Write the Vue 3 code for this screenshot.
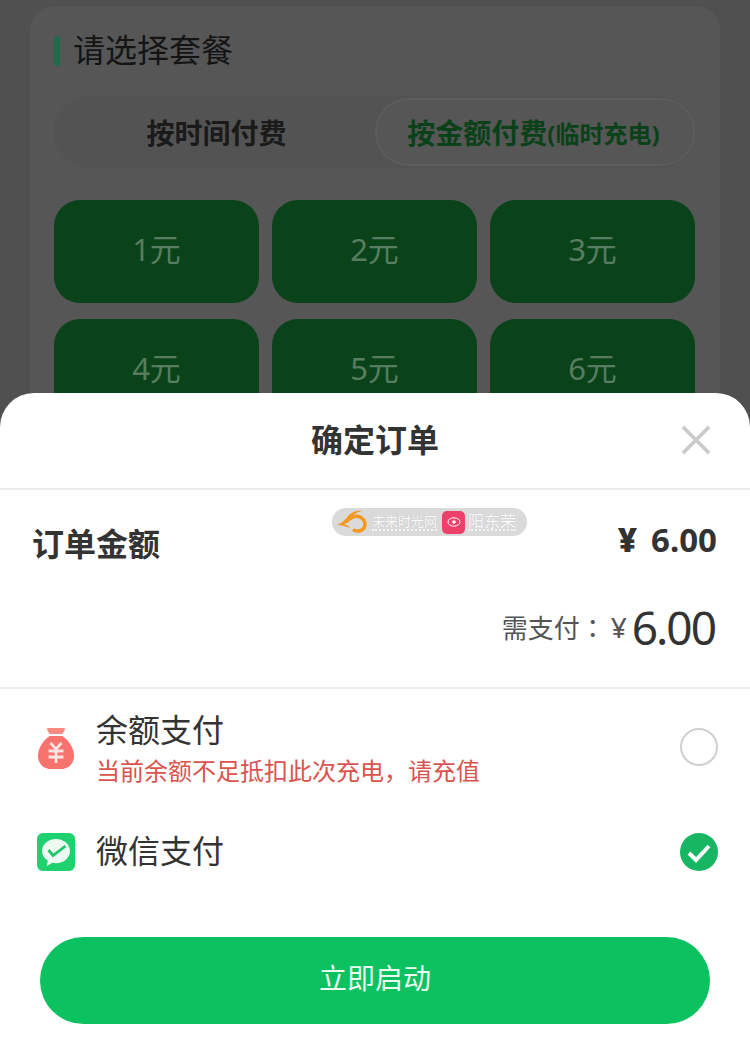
<template>
  <div class="screen">
    <section class="page">
      <div class="card">
        <div class="card-title"><i class="title-bar"></i><span class="title-text">请选择套餐</span></div>
        <div class="tabs">
          <div class="tab first">按时间付费</div>
          <div class="tab active">按金额付费<span class="tab-note">(临时充电)</span></div>
        </div>
        <div class="tiles">
          <div v-for="n in 6" :key="n" class="tile">{{ n }}元</div>
        </div>
      </div>
    </section>

    <section class="sheet">
      <header class="sheet-head">
        <h2>确定订单</h2>
        <svg class="close" viewBox="0 0 30 30" width="30" height="30">
          <path d="M2 2 28 28M28 2 2 28" stroke="#c9c9c9" stroke-width="3.4" fill="none" />
        </svg>
      </header>

      <div class="order">
        <div class="order-row">
          <span class="order-label">订单金额</span>
          <span class="order-price"><b class="yen">¥</b>6.00</span>
        </div>
        <div class="pay-row">
          <span class="pay-label">需支付<span class="pay-colon">：</span></span>
          <span class="pay-yen">¥</span>
          <span class="pay-num">6.00</span>
        </div>
      </div>

      <div class="methods">
        <div class="method balance">
          <svg class="method-icon bag" viewBox="0 0 36 41" width="36" height="41">
            <path d="M10 0h16c1 0 1.400.8 1 1.600L24.500 6h-13L9 1.600C8.600.8 9 0 10 0z" fill="#f98a84" />
            <path d="M11.500 8h13C30 12 36 19 36 28c0 8-6 13-13 13H13C6 41 0 36 0 28 0 19 6 12 11.500 8z" fill="#f8736d" />
            <path d="M12.500 15l5.500 6 5.500-6M10.500 23h15M10.500 29h15M18 21v14" stroke="#fde4e2" stroke-width="2.800" fill="none" />
          </svg>
          <div class="method-text">
            <div class="method-name">余额支付</div>
            <div class="method-warn">当前余额不足抵扣此次充电，请充值</div>
          </div>
          <span class="radio"></span>
        </div>
        <div class="method wechat">
          <svg class="method-icon" viewBox="0 0 38 38" width="38" height="38">
            <rect width="38" height="38" rx="6" fill="#1fd16f" />
            <path d="M19 6C11.300 6 5 11.200 5 18c0 4 2.300 7.400 5.700 9.600L10 33l5.300-3.200c1.200.3 2.400.4 3.700.4 7.700 0 14-5.400 14-12.200S26.700 6 19 6z" fill="#eefbf3" />
            <path d="M11.500 17l4.500 5.500L28.500 13" stroke="#1fc768" stroke-width="2.800" fill="none" />
          </svg>
          <div class="method-text">
            <div class="method-name">微信支付</div>
          </div>
          <svg class="checked" viewBox="0 0 38 38" width="38" height="38">
            <circle cx="19" cy="19" r="19" fill="#17b663" />
            <path d="M9 20l7 7 13-14" stroke="#fff" stroke-width="4" fill="none" />
          </svg>
        </div>
      </div>

      <button class="start" type="button"><span class="start-text">立即启动</span></button>

      <div class="watermark">
        <svg viewBox="0 0 32 24" width="32" height="24">
          <path d="M0 15C6 13 9 8 13 4c4-3 8-4 12-3-5 1-8 3-10 7-2 3-5 6-9 6 3 0 5 1 7 4-5-2-9-3-13-3z" fill="#f2991f" />
          <path d="M13 9c3-3 8-3.500 11-1.500 4 2.500 5 7 3 10.500-2.500 3.500-8 4-11 1.500" stroke="#f2991f" stroke-width="3.500" fill="none" />
        </svg>
        <span class="wm-name first-name">未来时光网</span>
        <span class="wm-logo">
          <svg viewBox="0 0 14 14" width="14" height="14">
            <ellipse cx="7" cy="7" rx="6" ry="4.200" stroke="#fff" fill="none" />
            <circle cx="7" cy="7" r="1.800" fill="#fff" />
          </svg>
        </span>
        <span class="wm-name second-name">阳东荣</span>
      </div>
    </section>
  </div>
</template>

<script setup>
</script>

<style>
body {
  background: #505050;
}
</style>

<style scoped>
.screen {
  position: relative;
  display: flex;
  flex-direction: column;
  width: 750px;
  height: 1064px;
  overflow: hidden;
  background: #505050;
  font-family: "Noto Sans", "Noto Sans CJK SC", sans-serif;
}

.page {
  height: 393px;
  padding: 6px 30px 0;
  box-sizing: border-box;
  overflow: hidden;
  flex-shrink: 0;
}

.card {
  height: 500px;
  padding: 25px 24px 0;
  box-sizing: border-box;
  background: #565656;
  border-radius: 24px;
}

.card-title {
  display: flex;
  align-items: center;
  gap: 13px;
  height: 40px;
  font-size: 32px;
  color: #141414;
}

.title-text {
  padding-bottom: 6px;
}

.title-bar {
  width: 6px;
  height: 30px;
  border-radius: 3px;
  background: #1f6b4c;
}

.tabs {
  display: grid;
  grid-template-columns: 321px 320px;
  width: 641px;
  height: 72px;
  margin-top: 25px;
  background: #535353;
  border-radius: 36px;
}

.tab {
  display: flex;
  align-items: center;
  justify-content: center;
  font-size: 28px;
  font-weight: 700;
  color: #1a1a1a;
}

.tab.first {
  padding-left: 4px;
}

.tab.active {
  height: 68px;
  margin-top: 2px;
  padding-right: 3px;
  box-sizing: border-box;
  border: 2px solid #5c5c5c;
  border-radius: 34px;
  background: #565656;
  color: #0a4119;
}

.tab-note {
  font-size: 24px;
}

.tiles {
  display: grid;
  grid-template-columns: repeat(3, 205px);
  grid-auto-rows: 103px;
  column-gap: 13px;
  row-gap: 16px;
  margin-top: 32px;
}

.tile {
  display: flex;
  align-items: center;
  justify-content: center;
  padding-bottom: 8px;
  box-sizing: border-box;
  border-radius: 26px;
  background: #0a4319;
  color: #587c60;
  font-size: 31px;
}

.sheet {
  position: relative;
  flex: 1;
  background: #fff;
  border-radius: 34px 34px 0 0;
  color: #333;
}

.sheet-head {
  display: flex;
  align-items: center;
  justify-content: center;
  position: relative;
  height: 95px;
  border-bottom: 2px solid #ececec;
}

.sheet-head h2 {
  margin: 0 0 5px;
  font-size: 32px;
  font-weight: 700;
  color: #333;
}

.close {
  position: absolute;
  right: 39px;
  top: 32px;
}

.order {
  height: 196px;
  padding: 1px 33px 0 32px;
  border-bottom: 2px solid #ececec;
}

.order-row {
  display: flex;
  align-items: center;
  justify-content: space-between;
  padding-top: 28px;
}

.order-label {
  font-size: 32px;
  font-weight: 700;
}

.order-price {
  font-size: 33px;
  font-weight: 700;
  margin-top: -6px;
}

.yen {
  margin-right: 14px;
}

.pay-row {
  display: flex;
  align-items: center;
  justify-content: flex-end;
  margin-top: 32px;
}

.pay-label {
  font-size: 26px;
  color: #555;
}

.pay-colon {
  font-family: "Noto Sans CJK TC", sans-serif;
}

.pay-yen {
  font-size: 28px;
  color: #555;
  margin: 0 5px;
}

.pay-num {
  font-size: 46px;
  line-height: 60px;
  letter-spacing: -2px;
  margin-right: 2px;
  color: #333;
}

.methods {
  padding: 17px 32px 0 37px;
}

.method {
  display: flex;
  align-items: center;
}

.method.balance {
  height: 84px;
}

.method.wechat {
  height: 60px;
  margin-top: 31px;
}

.method-icon {
  flex-shrink: 0;
}

.method-icon.bag {
  margin: 0 1px 0 1px;
}

.wechat .method-icon,
.checked {
  margin-top: 2px;
}

.method-text {
  flex: 1;
  margin-left: 21px;
}

.method-name {
  font-size: 32px;
  line-height: 44px;
  color: #333;
}

.method-warn {
  margin-top: 1px;
  font-size: 24px;
  line-height: 36px;
  color: #d9534f;
}

.radio {
  width: 38px;
  height: 38px;
  margin-bottom: 2px;
  box-sizing: border-box;
  border: 2px solid #cfcfcf;
  border-radius: 50%;
}

.start {
  display: block;
  width: 670px;
  height: 87px;
  margin: 56px 0 0 40px;
  padding: 0 0 8px;
  border: none;
  border-radius: 44px;
  background: #0cc160;
  color: #eafaf0;
  font-family: inherit;
  font-size: 28px;
}

.watermark {
  position: absolute;
  left: 332px;
  top: 115px;
  display: flex;
  align-items: center;
  width: 195px;
  height: 28px;
  padding-left: 5px;
  box-sizing: border-box;
  background: #dadada;
  border-radius: 14px;
}

.wm-name {
  color: #fafafa;
  line-height: 15px;
  border-bottom: 2px dotted #f4f4f4;
  text-shadow: 0 0 1px #b5b5b5;
}

.first-name {
  margin-left: 3px;
  font-size: 13px;
}

.second-name {
  font-size: 16px;
  line-height: 16px;
  margin-left: 3px;
}

.wm-logo {
  display: flex;
  align-items: center;
  justify-content: center;
  width: 23px;
  height: 23px;
  margin-left: 5px;
  border-radius: 5px;
  background: #ef3f6b;
}
</style>
